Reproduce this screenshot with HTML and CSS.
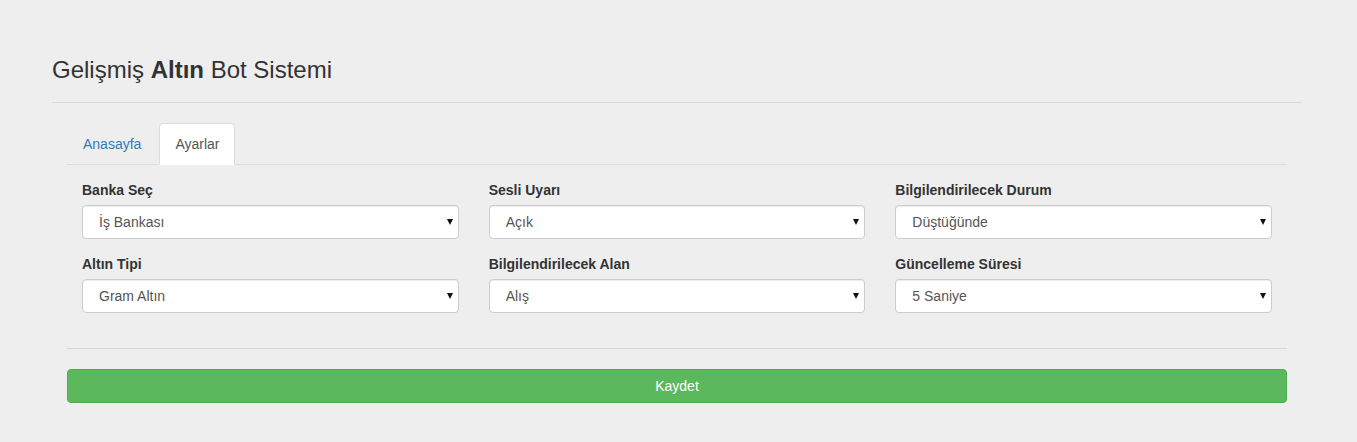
FILE: index.html
```html
<!DOCTYPE html>
<html lang="tr">
<head>
<meta charset="utf-8">
<title>Gelişmiş Altın Bot Sistemi</title>
<link rel="stylesheet" href="styles.css">
</head>
<body>
<div class="wrapper">
  <div class="page-header">
    <h3 class="title">Gelişmiş <strong>Altın</strong> Bot Sistemi</h3>
  </div>
  <div class="panel">
    <ul class="tabs">
      <li class="tab"><a href="#">Anasayfa</a></li>
      <li class="tab active"><a href="#">Ayarlar</a></li>
    </ul>
    <div class="tab-content">
      <div class="grid">
        <div class="field">
          <label class="label">Banka Seç</label>
          <div class="select-wrap"><select class="select"><option>İş Bankası</option></select></div>
        </div>
        <div class="field">
          <label class="label">Sesli Uyarı</label>
          <div class="select-wrap"><select class="select"><option>Açık</option></select></div>
        </div>
        <div class="field">
          <label class="label">Bilgilendirilecek Durum</label>
          <div class="select-wrap"><select class="select"><option>Düştüğünde</option></select></div>
        </div>
        <div class="field">
          <label class="label">Altın Tipi</label>
          <div class="select-wrap"><select class="select"><option>Gram Altın</option></select></div>
        </div>
        <div class="field">
          <label class="label">Bilgilendirilecek Alan</label>
          <div class="select-wrap"><select class="select"><option>Alış</option></select></div>
        </div>
        <div class="field">
          <label class="label">Güncelleme Süresi</label>
          <div class="select-wrap"><select class="select"><option>5 Saniye</option></select></div>
        </div>
      </div>
      <div class="divider"></div>
      <button class="btn-save" type="button">Kaydet</button>
    </div>
  </div>
</div>
</body>
</html>
```
FILE: styles.css
```css
* { box-sizing: border-box; }
html, body { margin: 0; padding: 0; }
body {
  background: #eeeeee;
  font-family: "Liberation Sans", Arial, Helvetica, sans-serif;
  font-size: 14px;
  line-height: 20px;
  color: #333333;
}
.wrapper {
  width: 1250px;
  margin-left: 52px;
  padding-top: 57px;
}
.page-header {
  padding-bottom: 19px;
  border-bottom: 1px solid #dadada;
}
.title {
  margin: 0;
  font-size: 24px;
  font-weight: 400;
  line-height: 26px;
  color: #333333;
}
.title strong { font-weight: 700; }
.panel {
  padding: 20px 15px 0 15px;
}
.tabs {
  list-style: none;
  margin: 0;
  padding: 0;
  display: flex;
  border-bottom: 1px solid #dddddd;
}
.tab {
  margin-right: 2px;
  margin-bottom: -1px;
}
.tab a {
  display: block;
  padding: 10px 15px;
  line-height: 20px;
  border: 1px solid transparent;
  border-radius: 4px 4px 0 0;
  color: #337ab7;
  text-decoration: none;
}
.tab.active a {
  background: #ffffff;
  color: #555555;
  border-color: #dddddd #dddddd transparent #dddddd;
}
.tab-content {
  padding-top: 15px;
}
.grid {
  display: grid;
  grid-template-columns: repeat(3, 1fr);
  column-gap: 30px;
  row-gap: 15px;
  padding: 0 15px;
}
.label {
  display: block;
  font-weight: 700;
  margin-bottom: 5px;
  color: #333333;
}
.select-wrap {
  position: relative;
}
.select-wrap::after {
  content: "";
  position: absolute;
  right: 6px;
  top: 14px;
  border-left: 3.5px solid transparent;
  border-right: 3.5px solid transparent;
  border-top: 6px solid #111111;
  pointer-events: none;
}
.select {
  -webkit-appearance: none;
  appearance: none;
  display: block;
  width: 100%;
  height: 34px;
  padding: 6px 12px 6px 16px;
  font-family: inherit;
  font-size: 14px;
  color: #555555;
  background: #ffffff;
  border: 1px solid #cccccc;
  border-radius: 4px;
  box-shadow: inset 0 1px 1px rgba(0,0,0,0.075);
}
.divider {
  margin-top: 35px;
  margin-bottom: 20px;
  border-top: 1px solid #d7d7d7;
}
.btn-save {
  display: block;
  width: 100%;
  height: 34px;
  padding: 6px 12px;
  font-family: inherit;
  font-size: 14px;
  color: #ffffff;
  background: #5cb85c;
  border: 1px solid #4cae4c;
  border-radius: 4px;
}
```
